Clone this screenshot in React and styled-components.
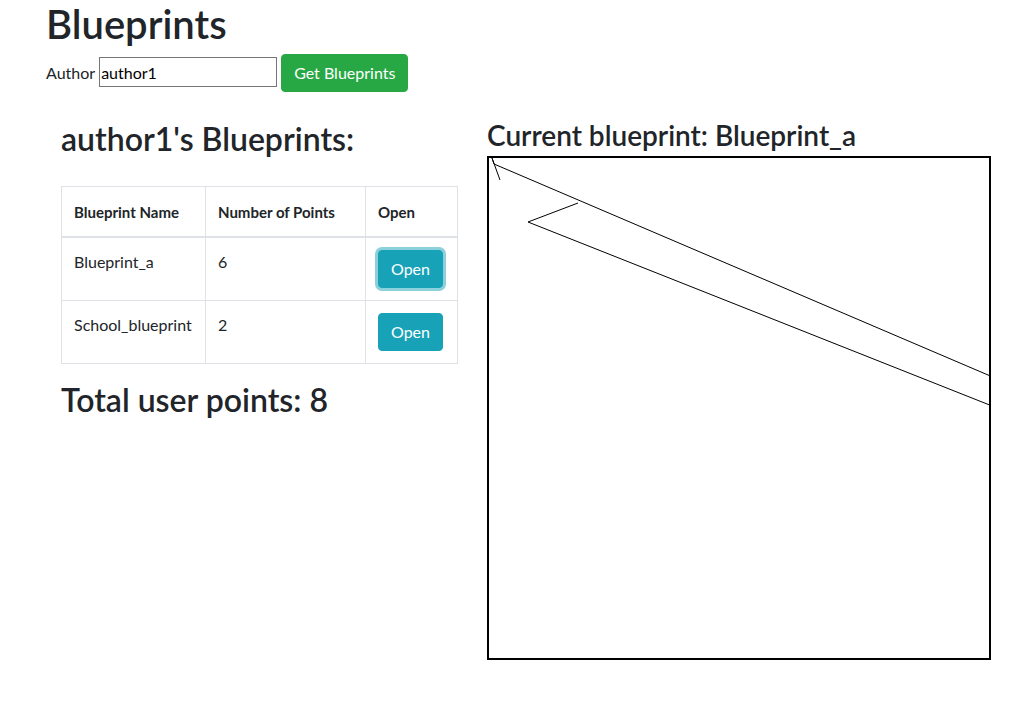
import React from 'react';
import styled, { createGlobalStyle } from 'styled-components';

const GlobalStyle = createGlobalStyle`
  body {
    margin: 0;
    background: #fff;
    color: #212529;
    font-family: Lato, "Open Sans", sans-serif;
    font-size: 16px;
    line-height: 1.5;
  }
`;

const Page = styled.div`
  padding: 0 46px;
`;

const Title = styled.h1`
  margin: 0;
  font-size: 40px;
  font-weight: 600;
  line-height: 48px;
`;

const SearchBar = styled.div`
  display: flex;
  align-items: center;
  gap: 4px;
  margin-top: 6px;
`;

const Label = styled.label`
  font-size: 16px;
`;

const AuthorInput = styled.input`
  width: 178px;
  height: 30px;
  box-sizing: border-box;
  border: 1px solid #767676;
  padding: 1px 1px;
  margin-top: -2px;
  font-family: inherit;
  font-size: 16px;
  color: #000;
  outline: none;
`;

const Button = styled.button`
  font-family: inherit;
  font-size: 16px;
  line-height: 24px;
  padding: 6px 12px;
  border: 1px solid ${p => p.$color};
  border-radius: 4px;
  background: ${p => p.$color};
  color: #fff;
  cursor: pointer;
  box-shadow: ${p => (p.$focused ? '0 0 0 3px rgba(23, 162, 184, 0.5)' : 'none')};
`;

const Row = styled.div`
  display: flex;
  margin-top: 28px;
`;

const LeftCol = styled.div`
  width: 396px;
  padding: 0 15px;
`;

const RightCol = styled.div`
  padding-left: 15px;
`;

const H2 = styled.h2`
  margin: 0 0 ${p => p.$mb || 0}px;
  font-size: 32px;
  font-weight: 600;
  line-height: 38px;
`;

const H3 = styled.h3`
  margin: -2px 0 4px;
  font-size: 28px;
  font-weight: 600;
  line-height: 34px;
`;

const Table = styled.table`
  width: 396px;
  border-collapse: collapse;
  margin-bottom: 17px;
  font-size: 16px;
  table-layout: fixed;
`;

const Th = styled.th`
  box-sizing: border-box;
  text-align: left;
  vertical-align: bottom;
  padding: 12px;
  height: 50px;
  border: 1px solid #dee2e6;
  border-bottom-width: 2px;
  font-weight: 700;
  font-size: 15px;
  white-space: nowrap;
  width: ${p => p.$w}px;
`;

const Td = styled.td`
  vertical-align: top;
  padding: 12px;
  border: 1px solid #dee2e6;
`;

const Board = styled.div`
  width: 500px;
  height: 500px;
  border: 2px solid #000;
  overflow: hidden;
`;

const blueprints = [
  { name: 'Blueprint_a', points: 6, focused: true },
  { name: 'School_blueprint', points: 2, focused: false },
];

export default function App() {
  return (
    <Page>
      <GlobalStyle />
      <Title>Blueprints</Title>
      <SearchBar>
        <Label htmlFor="author">Author</Label>
        <AuthorInput id="author" defaultValue="author1" />
        <Button $color="#28a745">Get Blueprints</Button>
      </SearchBar>
      <Row>
        <LeftCol>
          <H2 $mb={28}>author1's Blueprints:</H2>
          <Table>
            <thead>
              <tr>
                <Th $w={144}>Blueprint Name</Th>
                <Th $w={160}>Number of Points</Th>
                <Th $w={92}>Open</Th>
              </tr>
            </thead>
            <tbody>
              {blueprints.map(bp => (
                <tr key={bp.name}>
                  <Td>{bp.name}</Td>
                  <Td>{bp.points}</Td>
                  <Td>
                    <Button $color="#17a2b8" $focused={bp.focused}>Open</Button>
                  </Td>
                </tr>
              ))}
            </tbody>
          </Table>
          <H2>Total user points: 8</H2>
        </LeftCol>
        <RightCol>
          <H3>Current blueprint: Blueprint_a</H3>
          <Board>
            <svg width="500" height="500" viewBox="0 0 500 500">
              <polyline points="11,22 3,0 5,6 1000,431" fill="none" stroke="#000" strokeWidth="1" />
              <polyline points="89,45 39,64 1000,445" fill="none" stroke="#000" strokeWidth="1" />
            </svg>
          </Board>
        </RightCol>
      </Row>
    </Page>
  );
}
